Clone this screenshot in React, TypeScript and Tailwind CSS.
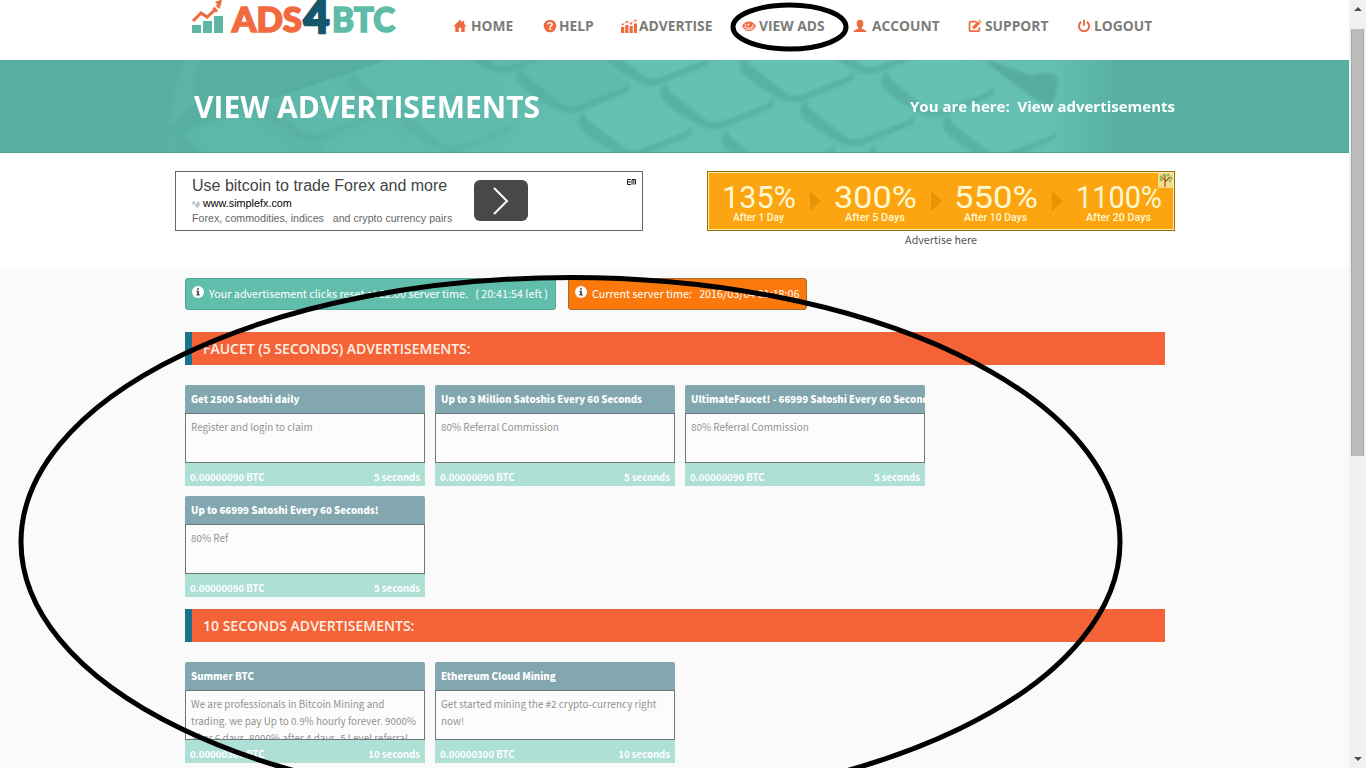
type Ad = { title: string; text: string; reward: string; time: string };

const faucetAds: Ad[] = [
  { title: "Get 2500 Satoshi daily", text: "Register and login to claim", reward: "0.00000090 BTC", time: "5 seconds" },
  { title: "Up to 3 Million Satoshis Every 60 Seconds", text: "80% Referral Commission", reward: "0.00000090 BTC", time: "5 seconds" },
  { title: "UltimateFaucet! - 66999 Satoshi Every 60 Seconds", text: "80% Referral Commission", reward: "0.00000090 BTC", time: "5 seconds" },
  { title: "Up to 66999 Satoshi Every 60 Seconds!", text: "80% Ref", reward: "0.00000090 BTC", time: "5 seconds" },
];

const tenSecondAds: Ad[] = [
  {
    title: "Summer BTC",
    text: "We are professionals in Bitcoin Mining and trading. we pay Up to 0.9% hourly forever. 9000% after 6 days. 8000% after 4 days. 5 Level referral",
    reward: "0.00000300 BTC",
    time: "10 seconds",
  },
  { title: "Ethereum Cloud Mining", text: "Get started mining the #2 crypto-currency right now!", reward: "0.00000300 BTC", time: "10 seconds" },
];

const icon = "h-[14px] w-full fill-[#ee6a3f]";

const HomeIcon = () => (
  <svg viewBox="0 0 14 14" className={icon}>
    <path d="M7 .8.300 7.600h2V13h3.500V8.800h2.400V13h3.500V7.600h2L11.200 5V2H9.600v1.400Z" />
  </svg>
);

const HelpIcon = () => (
  <svg viewBox="0 0 14 14" className={icon}>
    <circle cx="7" cy="7" r="6.300" />
    <path d="M4.900 5.500c0-2.400 4.400-2.300 4.200.2C9 7 7.200 6.900 7.200 8.400" fill="none" stroke="#fff" strokeWidth="1.600" />
    <path d="M6.300 9.300h1.700v1.600H6.300z" fill="#fff" />
  </svg>
);

const StatsIcon = () => (
  <svg viewBox="0 0 16 14" className={icon}>
    <path d="M0 8h3.200v6H0zM4.200 6h3.200v8H4.200zM8.500 7h3.200v7H8.500zM12.800 4.500H16V14h-3.200z" />
    <path d="M1.500 5.500 5.800 2.800l4.300 1.800L14.500 1" fill="none" stroke="#ee6a3f" strokeWidth=".5" />
    <circle cx="1.500" cy="5.500" r="1.100" />
    <circle cx="5.800" cy="2.800" r="1.100" />
    <circle cx="10.100" cy="4.600" r="1.100" />
    <circle cx="14.500" cy="1.500" r="1.100" />
  </svg>
);

const EyeIcon = () => (
  <svg viewBox="0 0 14 14" className={icon}>
    <path d="M0 7.300C2.800 1 11.200 1 14 7.300 11.200 13.600 2.800 13.600 0 7.300Z" />
    <path d="M3.300 5.300c-1.300 5.200 8.700 5.200 7.400 0" fill="none" stroke="#fff" strokeWidth="1" />
    <path d="M1.600 7.500c2 4.200 8.800 4.200 10.800 0" fill="none" stroke="#fff" strokeWidth=".7" />
    <circle cx="6.300" cy="5.600" r="1" fill="#fff" />
  </svg>
);

const UserIcon = () => (
  <svg viewBox="0 0 14 14" className={icon}>
    <path d="M7 .8C4.300.8 3.500 2.500 3.700 4.900c.1 1.500.7 2.700 1.500 3.500v1.400C3.300 10.700.6 11.100.4 13h13.200c-.2-1.900-2.900-2.300-4.800-3.200V8.400c.8-.8 1.400-2 1.500-3.500C10.500 2.500 9.700.8 7 .8Z" />
  </svg>
);

const EditIcon = () => (
  <svg viewBox="0 0 14 14" className={icon}>
    <path d="M8.500 2.600H3.200a1.700 1.700 0 0 0-1.700 1.700v6.100a1.700 1.700 0 0 0 1.700 1.700h6.500a1.700 1.700 0 0 0 1.700-1.700V8.300" fill="none" stroke="#ee6a3f" strokeWidth="1.700" />
    <path d="m4.500 9.900.3-2.700 5-5 2.400 2.400-5 5ZM10.400 1.600l.8-.8L13.600 3.200l-.8.8Z" />
  </svg>
);

const PowerIcon = () => (
  <svg viewBox="0 0 14 14" className={icon}>
    <path d="M4.200 2.900a5.100 5.100 0 1 0 5.600 0M7 .8v6" fill="none" stroke="#ee6a3f" strokeWidth="1.900" />
  </svg>
);

const InfoIcon = () => (
  <svg viewBox="0 0 12 12" className="mb-[5px] h-3 w-3 shrink-0">
    <circle cx="6" cy="6" r="6" fill="#fff" />
    <path d="M5 2.200h2v1.500H5zM4.400 4.800H7v3.500h.8v1.200H4.300V8.300H5V5.900h-.6z" fill="#555" />
  </svg>
);

const navItems = [
  { label: "HOME", Icon: HomeIcon, width: "w-[90px]", box: "w-[18px] pr-1" },
  { label: "HELP", Icon: HelpIcon, width: "w-[78px]", box: "w-[16px] pr-[2px]" },
  { label: "ADVERTISE", Icon: StatsIcon, width: "w-[121px]", box: "w-[18px] pr-[2px]" },
  { label: "VIEW ADS", Icon: EyeIcon, width: "w-[111px]", box: "w-[17px] pr-[3px]" },
  { label: "ACCOUNT", Icon: UserIcon, width: "w-[115px]", box: "w-[19px] pr-[5px]" },
  { label: "SUPPORT", Icon: EditIcon, width: "w-[109px]", box: "w-[17px] pr-[3px]" },
  { label: "LOGOUT", Icon: PowerIcon, width: "w-[90px]", box: "w-[17px] pr-[3px]" },
];

function Logo() {
  return (
    <svg viewBox="0 0 210 40" className="h-10 w-[210px] shrink-0" fontFamily="Lato, sans-serif" fontWeight="900" strokeWidth="1.600">
      <path d="M2 25h9v8H2zM13 21h9v12h-9zM24 16h9v17h-9z" fill="#5db7a4" />
      <path d="m3 21 8-8 6 4 9-8" fill="none" stroke="#ee6a3f" strokeWidth="3" />
      <path d="m22.500 8.500 3.500 4 2-1.800-3.500-4ZM25.800 5.500l3 3.500 1.500-1.400-3-3.500ZM25 2l7-2.500L30.500 7Z" fill="#ee6a3f" />
      <text x="42" y="32.300" fontSize="33.500" fill="#f26b40" stroke="#f26b40" textLength="70" lengthAdjust="spacingAndGlyphs">ADS</text>
      <text x="113.500" y="32.500" fontSize="45" fill="#16566c" stroke="#16566c" strokeWidth="2.500" textLength="26" lengthAdjust="spacingAndGlyphs">4</text>
      <text x="142" y="32.300" fontSize="33.500" fill="#5fbca8" stroke="#5fbca8" textLength="63" lengthAdjust="spacingAndGlyphs">BTC</text>
    </svg>
  );
}

// Centres of the keys in the artwork behind the page title
const keys = [
  [235, 80], [370, 92], [315, 42], [405, 18], [455, 54], [505, -26], [573, 14], [635, 58], [655, -14],
  [717, 30], [778, 76], [797, 3], [857, 47], [872, -25], [938, 18], [925, 92], [1000, 62],
];

function KeyboardArt() {
  return (
    <svg viewBox="0 0 1349 93" preserveAspectRatio="none" className="absolute inset-0 h-full w-full">
      <defs>
        <linearGradient id="desk" x1="0" x2="1">
          <stop offset=".08" stopColor="#57afa2" />
          <stop offset=".27" stopColor="#5eb9ab" />
          <stop offset=".5" stopColor="#64c0b2" />
          <stop offset=".78" stopColor="#64c0b2" />
          <stop offset=".83" stopColor="#57afa2" />
        </linearGradient>
        <linearGradient id="fade" x1="150" x2="600" gradientUnits="userSpaceOnUse">
          <stop offset="0" stopColor="#5ab3a5" />
          <stop offset="1" stopColor="#65c1b3" />
        </linearGradient>
        <filter id="soft"><feGaussianBlur stdDeviation="1.500" /></filter>
      </defs>
      <rect width="1349" height="93" fill="url(#desk)" />
      <g filter="url(#soft)">
        {keys.map(([x, y]) => (
          <g key={`${x}-${y}`} transform={`translate(${x} ${y})`} opacity={x < 480 ? 0.5 : 0.9}>
            <path d="M-50-6Q-59-3-56 7Q-48 20-16 36Q-4 42 8 37L52 19Q61 13 54 8Z" fill="#55ab9d" opacity=".75" />
            <path d="M-47-8Q-54-5-44 4L-12 29Q-4 35 6 31L50 14Q58 10 50 5L16-22Q8-27-2-24Z" fill={x < 600 ? "#60bbad" : "#65c1b3"} />
          </g>
        ))}
        <path d="m982-2 50 18q20-8 26 4-1 15-7 28-24-12-69-50Z" fill="#56ac9f" />
      </g>
      <path d="M0 0h388L111 93H0Z" fill="#57afa2" />
      <path d="M184 0h18q-14 20-4 40l-30 30q4-40 16-70Z" fill="#60b9ab" opacity=".5" filter="url(#soft)" />
      <path d="M0 92.500h1349" stroke="#4da092" />
    </svg>
  );
}

function ForexAd() {
  return (
    <div className="flex h-[60px] w-[468px] items-start border border-[#666] bg-white font-['Liberation_Sans',sans-serif]">
      <div className="w-[298px] whitespace-nowrap pl-4">
        <p className="mt-[3px] text-[16px] leading-[22px] text-[#444]">Use bitcoin to trade Forex and more</p>
        <p className="flex items-center gap-[3px] text-[10.800px] leading-[13px] text-black">
          <svg viewBox="0 0 8 8" className="h-2 w-2"><path d="M0 2 3 1v3L1 5ZM4 3l3-2 1 4-3 3-2-2Z" fill="#b8c4c9" /></svg>
          www.simplefx.com
        </p>
        <p className="whitespace-pre text-[10.650px] leading-[16px] text-[#666]">Forex, commodities, indices   and crypto currency pairs</p>
      </div>
      <div className="mt-2 flex h-[41px] w-[54px] items-center justify-center rounded-md bg-[#484848]">
        <svg viewBox="0 0 16 28" className="h-7 w-4"><path d="m1 1 13 13L1 27" fill="none" stroke="#fff" strokeWidth="2" /></svg>
      </div>
      <svg viewBox="0 0 9 6" className="ml-auto mr-[6px] mt-[7px] h-[6px] w-[9px]">
        <path d="M4 .5H.5v5H4M.5 3H4M5 5.500v-5h3.500v5M6.800.5v5" fill="none" stroke="#222" />
      </svg>
    </div>
  );
}

function ReturnsAd() {
  const steps = [
    { x: 15, width: 74, value: "135%", label: "After 1 Day", lx: 26, lw: 51 },
    { x: 127, width: 83, value: "300%", label: "After 5 Days", lx: 138, lw: 60 },
    { x: 247, width: 84, value: "550%", label: "After 10 Days", lx: 257, lw: 63 },
    { x: 369, width: 86, value: "1100%", label: "After 20 Days", lx: 379, lw: 65 },
  ];
  return (
    <svg viewBox="0 0 468 60" className="h-[60px] w-[468px]" fontFamily="Roboto, sans-serif" fill="#fff8d0">
      <rect x=".5" y=".5" width="467" height="59" fill="#ffefaa" stroke="#94700f" />
      <rect x="2" y="2" width="464" height="56" fill="#fca510" />
      {steps.map((s) => (
        <g key={s.value}>
          <text x={s.x} y="36.500" fontSize="31" textLength={s.width} lengthAdjust="spacingAndGlyphs">{s.value}</text>
          <text x={s.lx} y="50" fontSize="10.500" fontWeight="500" textLength={s.lw} lengthAdjust="spacingAndGlyphs">{s.label}</text>
        </g>
      ))}
      <path d="M103 20v20l11-10ZM224 20v20l11-10ZM345 20v20l11-10Z" fill="#e59505" />
      <rect x="451" y="2" width="15" height="15" fill="#f5dc8c" />
      <path d="M458 16V9l-4-3m4 5 5-5m-5 4V4" fill="none" stroke="#9b5a2c" strokeWidth="1.300" />
      <g fill="#8fb455">
        <circle cx="454" cy="6" r="1.500" /><circle cx="457" cy="4" r="1.500" /><circle cx="461" cy="4" r="1.500" /><circle cx="464" cy="7" r="1.500" /><circle cx="463" cy="10" r="1.200" /><circle cx="454" cy="9" r="1.200" />
      </g>
    </svg>
  );
}

function SectionTitle({ children }: { children: string }) {
  return (
    <h2 className="flex h-[33px] items-center border-l-[7px] border-[#1b748c] bg-[#f46337] pl-[11px] font-['Open_Sans',sans-serif] text-[14px] font-semibold text-[#fff1e6]">
      {children}
    </h2>
  );
}

function AdCard({ ad }: { ad: Ad }) {
  return (
    <div className="h-[101px] w-[240px] overflow-hidden rounded-t-[2px]">
      <h3 className="h-7 overflow-hidden whitespace-nowrap bg-[#82a7af] pl-[6px] text-[9.700px] font-black leading-[28px] text-white">{ad.title}</h3>
      <div className="h-[50px] overflow-hidden border border-[#6c777b] bg-[#fcfcfc] pl-[5px] pr-1 pt-[5px] text-[9.900px] leading-[17px] text-[#929292]">
        {ad.text}
      </div>
      <div className="flex h-[23px] justify-between bg-[#afe0d6] px-[5px] pt-[3px] text-[9.600px] font-bold leading-[23px] text-white">
        <span>{ad.reward}</span>
        <span>{ad.time}</span>
      </div>
    </div>
  );
}

export default function App() {
  return (
    <div className="relative flex h-[768px] w-[1366px] overflow-hidden bg-[#fafafa] font-['Noto_Sans_CJK_SC',sans-serif]">
      <div className="w-[1349px]">
        {/* Header */}
        <header className="flex h-[60px] bg-white pl-[190px]">
          <Logo />
          <nav className="ml-[53px] flex h-[52px] items-center font-['Open_Sans',sans-serif] text-[13.800px] font-bold text-[#7c7c79]">
            {navItems.map(({ label, Icon, width, box }) => (
              <a key={label} className={`flex items-center whitespace-nowrap ${width}`}>
                <span className={`shrink-0 ${box}`}><Icon /></span>
                {label}
              </a>
            ))}
          </nav>
        </header>

        {/* Page title */}
        <section className="relative h-[93px]">
          <KeyboardArt />
          <div className="relative flex h-full items-center justify-between pl-[194px] pr-[174px] font-['Open_Sans',sans-serif] font-bold text-white">
            <h1 className="text-[30px]">VIEW ADVERTISEMENTS</h1>
            <p className="whitespace-pre text-[15px]">You are here:  View advertisements</p>
          </div>
        </section>

        {/* Banner ads */}
        <section className="flex h-[114px] justify-between bg-white pl-[175px] pr-[174px] pt-[18px]">
          <ForexAd />
          <div className="w-[468px]">
            <ReturnsAd />
            <p className="text-center text-[10.750px] leading-[18px] text-[#555]">Advertise here</p>
          </div>
        </section>

        {/* Advertisement lists */}
        <main className="pl-[185px] pr-[184px] pt-[11px]">
          <div className="mb-[22px] flex gap-3 whitespace-pre text-[10.750px] text-white">
            <div className="flex h-8 w-[371px] items-center gap-[5px] rounded-[3px] border border-[#55a998] bg-[#62beac] pl-[6px]">
              <InfoIcon />
              <span>Your advertisement clicks reset at 22:00 server time.   ( 20:41:54 left )</span>
            </div>
            <div className="flex h-8 w-[239px] items-center gap-[5px] rounded-[3px] border border-[#a46b2d] bg-[#fb790c] pl-[6px]">
              <InfoIcon />
              <span>Current server time:   2016/03/04 01:18:06</span>
            </div>
          </div>
          <SectionTitle>FAUCET (5 SECONDS) ADVERTISEMENTS:</SectionTitle>
          <div className="mb-3 mt-5 flex flex-wrap gap-[10px] pr-[200px]">
            {faucetAds.map((ad) => <AdCard key={ad.title} ad={ad} />)}
          </div>
          <SectionTitle>10 SECONDS ADVERTISEMENTS:</SectionTitle>
          <div className="mt-5 flex gap-[10px]">
            {tenSecondAds.map((ad) => <AdCard key={ad.title} ad={ad} />)}
          </div>
        </main>
      </div>

      {/* Scrollbar */}
      <aside className="flex w-[17px] flex-col items-center bg-[#f1f1f1]">
        <span className="mt-[7px] h-0 w-0 border-x-4 border-b-4 border-x-transparent border-b-[#505050]" />
        <span className="mt-[18px] h-[427px] w-[13px] border-x border-[#a8a8a8] bg-[#bcbcbc]" />
        <span className="mb-[7px] mt-auto h-0 w-0 border-x-4 border-t-4 border-x-transparent border-t-[#505050]" />
      </aside>

      {/* Hand-drawn highlights */}
      <svg viewBox="0 0 1366 768" className="pointer-events-none absolute inset-0 h-full w-full" fill="none" stroke="#000" strokeWidth="5">
        <ellipse cx="789.500" cy="27" rx="56.500" ry="22" />
        <ellipse cx="570.500" cy="542" rx="549.500" ry="264.500" />
      </svg>
    </div>
  );
}
